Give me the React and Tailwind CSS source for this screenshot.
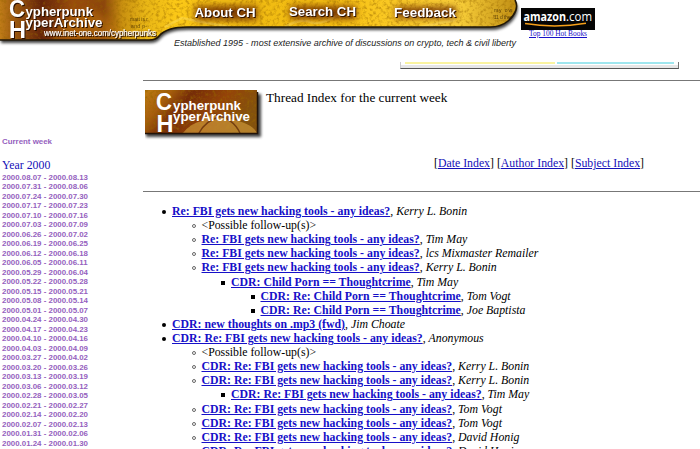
const weeks = [
  '2000.08.07 - 2000.08.13', '2000.07.31 - 2000.08.06', '2000.07.24 - 2000.07.30',
  '2000.07.17 - 2000.07.23', '2000.07.10 - 2000.07.16', '2000.07.03 - 2000.07.09',
  '2000.06.26 - 2000.07.02', '2000.06.19 - 2000.06.25', '2000.06.12 - 2000.06.18',
  '2000.06.05 - 2000.06.11', '2000.05.29 - 2000.06.04', '2000.05.22 - 2000.05.28',
  '2000.05.15 - 2000.05.21', '2000.05.08 - 2000.05.14', '2000.05.01 - 2000.05.07',
  '2000.04.24 - 2000.04.30', '2000.04.17 - 2000.04.23', '2000.04.10 - 2000.04.16',
  '2000.04.03 - 2000.04.09', '2000.03.27 - 2000.04.02', '2000.03.20 - 2000.03.26',
  '2000.03.13 - 2000.03.19', '2000.03.06 - 2000.03.12', '2000.02.28 - 2000.03.05',
  '2000.02.21 - 2000.02.27', '2000.02.14 - 2000.02.20', '2000.02.07 - 2000.02.13',
  '2000.01.31 - 2000.02.06', '2000.01.24 - 2000.01.30',
];

const RE = 'Re: FBI gets new hacking tools - any ideas?';
const CDR = 'CDR: Re: FBI gets new hacking tools - any ideas?';

const threads = [
  { title: RE, author: 'Kerry L. Bonin', replies: [
    { note: '<Possible follow-up(s)>' },
    { title: RE, author: 'Tim May' },
    { title: RE, author: 'lcs Mixmaster Remailer' },
    { title: RE, author: 'Kerry L. Bonin', replies: [
      { title: 'CDR: Child Porn == Thoughtcrime', author: 'Tim May', replies: [
        { title: 'CDR: Re: Child Porn == Thoughtcrime', author: 'Tom Vogt' },
        { title: 'CDR: Re: Child Porn == Thoughtcrime', author: 'Joe Baptista' },
      ] },
    ] },
  ] },
  { title: 'CDR: new thoughts on .mp3 (fwd)', author: 'Jim Choate' },
  { title: CDR, author: 'Anonymous', replies: [
    { note: '<Possible follow-up(s)>' },
    { title: CDR, author: 'Kerry L. Bonin' },
    { title: CDR, author: 'Kerry L. Bonin', replies: [{ title: CDR, author: 'Tim May' }] },
    { title: CDR, author: 'Tom Vogt' },
    { title: CDR, author: 'Tom Vogt' },
    { title: CDR, author: 'David Honig' },
    { title: CDR, author: 'David Honig' },
  ] },
];

const bullets = [
  'size-[4px] rounded-full bg-black',
  'size-[4px] rounded-full border-[0.6px] border-[#666]',
  'size-[4px] bg-black',
  'size-[4px] bg-black',
];

function Thread({ items, level }) {
  return (
    <ul className="pl-[29.5px]">
      {items.map((item, i) => (
        <li key={i}>
          <div className="flex h-[14.12px] items-center whitespace-nowrap leading-[14.12px]">
            <span className="-ml-[10px] mr-[6px] flex w-[4px] shrink-0 justify-center pt-[2px]">
              <span className={bullets[level]} />
            </span>
            {item.note ? (
              <span>{item.note}</span>
            ) : (
              <span>
                <a className="font-bold text-[#1610c8] underline">{item.title}</a>, <i>{item.author}</i>
              </span>
            )}
          </div>
          {item.replies && <Thread items={item.replies} level={level + 1} />}
        </li>
      ))}
    </ul>
  );
}

const bannerShape = 'M0 0H515C519 7 515 15 508 21Q501 27 490 27H187C173 27 164 30 159 36Q156 40 149 40H0Z';

function Banner() {
  return (
    <svg className="block h-[50px] w-[520px] shrink-0 font-['Liberation_Sans',sans-serif]" viewBox="0 0 520 50">
      <defs>
        <linearGradient id="gold" x1="0" x2="520" y1="0" y2="0" gradientUnits="userSpaceOnUse">
          <stop offset="0" stopColor="#c07c18" />
          <stop offset=".035" stopColor="#94500f" />
          <stop offset=".08" stopColor="#65240a" />
          <stop offset=".14" stopColor="#994c0c" />
          <stop offset=".2" stopColor="#8c460c" />
          <stop offset=".235" stopColor="#c99010" />
          <stop offset=".28" stopColor="#e8b616" />
          <stop offset=".34" stopColor="#fbc817" />
          <stop offset=".5" stopColor="#f0bb12" />
          <stop offset=".65" stopColor="#f8c213" />
          <stop offset=".88" stopColor="#fad03a" />
          <stop offset="1" stopColor="#bd8b12" />
        </linearGradient>
        <filter id="grain" x="0" y="0" width="100%" height="100%">
          <feTurbulence type="fractalNoise" baseFrequency=".3" numOctaves="3" seed="8" />
          <feColorMatrix values="0 0 0 0 .3  0 0 0 0 .13  0 0 0 0 0  3 0 0 0 -1.4" />
        </filter>
        <filter id="soft" x="-20%" y="-80%" width="140%" height="260%"><feGaussianBlur stdDeviation="3.5" /></filter>
        <filter id="shade" x="-5%" y="-20%" width="110%" height="150%"><feGaussianBlur stdDeviation="1.8" /></filter>
        <clipPath id="shape"><path d={bannerShape} /></clipPath>
      </defs>
      <path d={bannerShape} transform="translate(1 3)" fill="#000" opacity=".75" filter="url(#shade)" />
      <g clipPath="url(#shape)">
        <rect width="520" height="42" fill="url(#gold)" />
        <path d="M52 40Q62 18 90 10Q115 18 124 40Z" fill="#c4780f" opacity=".45" filter="url(#soft)" />
        <rect width="520" height="42" filter="url(#grain)" opacity=".45" />
        <path d="M165 27L182 18L202 22L230 27M285 27Q300 18 310 22T338 15M455 20L420 27" fill="none" stroke="#ffe06a" strokeWidth="2.5" opacity=".4" />
        <g fill="#6b2600" opacity=".85" filter="url(#soft)">
          <rect x="195" y="6" width="62" height="14" />
          <rect x="290" y="6" width="66" height="13" />
          <rect x="395" y="7" width="61" height="11" />
        </g>
        <g fill="#3a2400" opacity=".75" fontSize="5">
          <text x="130" y="21" textLength="18">matt is r</text>
          <text x="131" y="28" textLength="16">and p-</text>
          <text x="494" y="12" textLength="18">my ow</text>
          <text x="493" y="19" textLength="20">'11 d then</text>
        </g>
      </g>
      <path d="M0 40H149Q156 40 159 36C164 30 173 27 187 27H490Q501 27 508 21C515 15 519 7 515 0" fill="none" stroke="#221808" strokeWidth="1.6" />
      <g fill="#fff" fontWeight="bold" className="drop-shadow-[1px_1px_0.5px_#2b1000]">
        <text x="9" y="16.7" fontSize="23.5" textLength="16" lengthAdjust="spacingAndGlyphs">C</text>
        <text x="9" y="37.5" fontSize="24" textLength="17" lengthAdjust="spacingAndGlyphs">H</text>
        <text x="25.500" y="16" fontSize="12.8" textLength="67.500" lengthAdjust="spacingAndGlyphs">ypherpunk</text>
        <text x="25.500" y="26.8" fontSize="12.8" textLength="77" lengthAdjust="spacingAndGlyphs">yperArchive</text>
        <text x="194.500" y="17" fontSize="13" textLength="61" lengthAdjust="spacingAndGlyphs">About CH</text>
        <text x="289" y="16" fontSize="13" textLength="67" lengthAdjust="spacingAndGlyphs">Search CH</text>
        <text x="394" y="17" fontSize="13" textLength="62" lengthAdjust="spacingAndGlyphs">Feedback</text>
        <text x="44" y="36" fontSize="8.8" textLength="112" fontWeight="normal" lengthAdjust="spacingAndGlyphs" stroke="#fff" strokeWidth=".2">www.inet-one.com/cypherpunks</text>
      </g>
      <text x="174" y="46" fontSize="9.8" fontStyle="italic" fill="#222" textLength="342" lengthAdjust="spacingAndGlyphs">Established 1995 - most extensive archive of discussions on crypto, tech &amp; civil liberty</text>
    </svg>
  );
}

function Logo() {
  return (
    <svg className="block h-[52px] w-[121px] shrink-0 font-['Liberation_Sans',sans-serif]" viewBox="145 90 121 52">
      <defs>
        <linearGradient id="rust" x1="0" x2="1" y1="0" y2=".3">
          <stop offset="0" stopColor="#bd7b12" />
          <stop offset=".22" stopColor="#a65d0d" />
          <stop offset=".4" stopColor="#752c08" />
          <stop offset=".7" stopColor="#954408" />
          <stop offset="1" stopColor="#83510e" />
        </linearGradient>
      </defs>
      <rect x="146" y="94" width="115" height="43" fill="#000" opacity=".75" filter="url(#shade)" />
      <path d="M145 90H257V133.500H145Z" fill="url(#rust)" />
      <rect x="145" y="90" width="112" height="43.500" filter="url(#grain)" opacity=".6" />
      <path d="M183 133Q191 123 202 121L210 115L230 119Q252 123 257 133Z" fill="#d09a3c" opacity=".65" />
      <path d="M199 133Q206 120 222 116M214 114Q233 118 240 133" fill="none" stroke="#5a2406" strokeWidth="1.500" opacity=".7" />
      <path d="M145 133.500H257.500V92" fill="none" stroke="#221308" strokeWidth="1.500" />
      <g fill="#fff" fontWeight="bold">
        <text x="156" y="109.700" fontSize="23.500" textLength="16" lengthAdjust="spacingAndGlyphs">C</text>
        <text x="156.500" y="132" fontSize="24" textLength="17" lengthAdjust="spacingAndGlyphs">H</text>
        <text x="173" y="109.500" fontSize="12.800" textLength="68" lengthAdjust="spacingAndGlyphs">ypherpunk</text>
        <text x="173" y="120.500" fontSize="12.800" textLength="77" lengthAdjust="spacingAndGlyphs">yperArchive</text>
      </g>
    </svg>
  );
}

function Amazon() {
  return (
    <div className="ml-px flex w-[74px] flex-col items-center pt-[8px]">
      <svg className="block h-[22px] w-[74px] font-['Open_Sans',sans-serif]" viewBox="0 0 74 22">
        <rect width="74" height="22" fill="#050505" />
        <text x="2.500" y="12.500" fontSize="12.500" fontWeight="bold" fill="#fff" textLength="42.500" lengthAdjust="spacingAndGlyphs">amazon</text>
        <text x="45" y="12.500" fontSize="12.500" fill="#fff" textLength="26" lengthAdjust="spacingAndGlyphs">.com</text>
        <path d="M4 15.500Q34 20.500 65 15.300" fill="none" stroke="#f6a01a" strokeWidth="1.600" />
      </svg>
      <a className="whitespace-nowrap text-[7.4px] leading-[8.500px] text-[#1610c8] underline">Top 100 Hot Books</a>
    </div>
  );
}

export default function App() {
  return (
    <div className="h-[449px] w-[700px] overflow-hidden bg-white font-['Liberation_Serif',serif] text-[11.8px] text-black">
      <header className="flex h-[50px]">
        <Banner />
        <Amazon />
      </header>
      <div className="flex">
        <aside className="w-[142.5px] shrink-0 whitespace-nowrap pl-[2px] pt-[87px]">
          <div className="font-['Liberation_Sans',sans-serif] text-[7.9px] font-bold leading-[10px] text-[#955fbe]">Current week</div>
          <div className="mt-[11px] leading-[14px] text-[#1610b8]">Year 2000</div>
          <div className="mt-[1px] font-['Liberation_Sans',sans-serif] text-[7.9px] font-bold leading-[9.49px] text-[#955fbe]">
            {weeks.map((w) => <div key={w}>{w}</div>)}
          </div>
        </aside>
        <main className="w-[557.5px] shrink-0 pt-[12px]">
          <div className="ml-[257.500px] flex h-[7px] w-[279px] gap-[1px] border-b border-l border-r border-b-[#555] border-l-[#ccc] border-r-[#777] bg-[#e6e6e6]">
            <div className="flex h-[3px] flex-1 gap-[2px] bg-white px-[4px]">
              <div className="h-[2px] w-[150px] bg-[#faf4a0]" />
              <div className="h-[2px] flex-1 bg-[#9fe6ee]" />
            </div>
          </div>
          <div className="mt-[11px] h-px bg-[#777]" />
          <div className="flex pl-[2.500px] pt-[9px]">
            <Logo />
            <h1 className="whitespace-nowrap text-[13.25px] leading-[15px]">Thread Index for the current week</h1>
          </div>
          <nav className="mt-[14px] whitespace-nowrap pl-[291.500px] leading-[14px]">
            [<a className="text-[#1610b8] underline">Date Index</a>] [<a className="text-[#1610b8] underline">Author Index</a>] [<a className="text-[#1610b8] underline">Subject Index</a>]
          </nav>
          <div className="mt-[21px] h-px bg-[#777]" />
          <div className="pt-[12px]">
            <Thread items={threads} level={0} />
          </div>
        </main>
      </div>
    </div>
  );
}
